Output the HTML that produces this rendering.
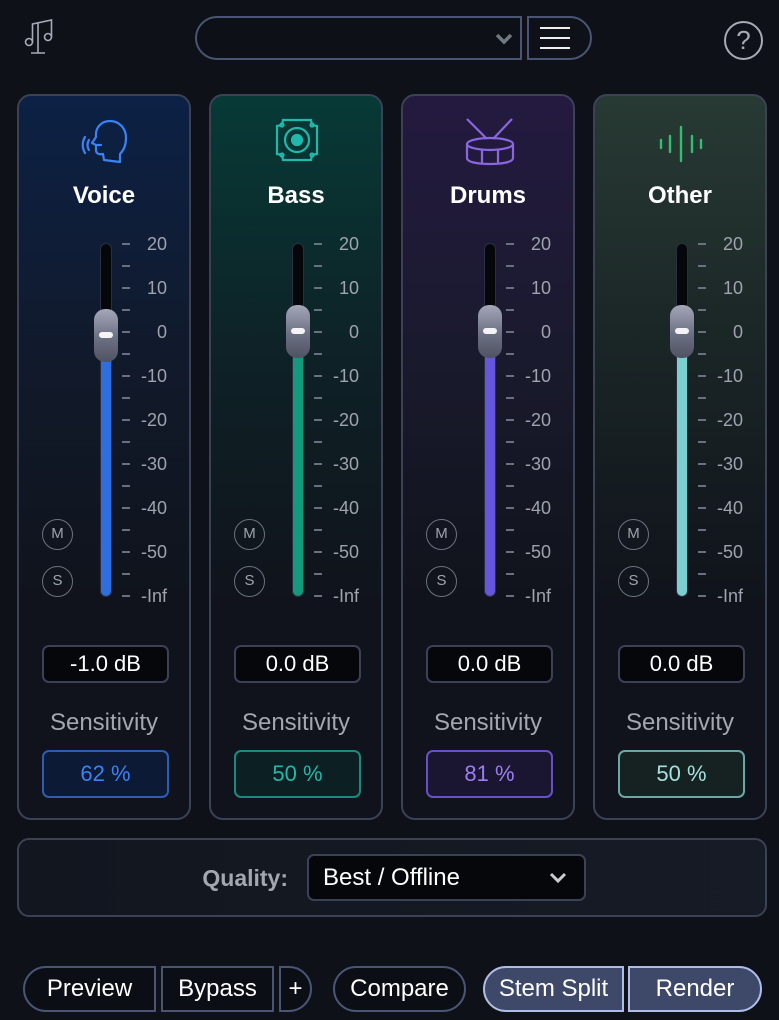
<!DOCTYPE html>
<html><head><meta charset="utf-8"><style>
*{margin:0;padding:0;box-sizing:border-box}
body{width:779px;height:1020px;background:#0e1118;font-family:"Liberation Sans",sans-serif;position:relative;overflow:hidden;color:#fff}
.a{position:absolute}
.panel{position:absolute;top:94px;width:174px;height:726px;border:2px solid #3b4258;border-radius:14px;overflow:hidden}
.title{position:absolute;top:86px;width:100%;text-align:center;font-weight:bold;font-size:24px;color:#fff}
.track{position:absolute;left:81px;top:147px;width:12px;height:354px;border-radius:6px;background:#05070b;border:1px solid #2a3040}
.fill{position:absolute;left:82px;width:10px;border-radius:0 0 5px 5px}
.thumb{position:absolute;left:75px;width:24px;height:53px;border-radius:11px;background:linear-gradient(#a3a7b8,#6c7083 55%,#4e5262)}
.thumb:after{content:"";position:absolute;left:5px;top:23px;width:14px;height:6px;border-radius:3px;background:#f4f4f6}
.ticks{position:absolute;left:103px;top:147px;width:8px;height:355px;background:repeating-linear-gradient(to bottom,#6a7080 0 2px,transparent 2px 22px)}
.lab{position:absolute;right:22px;font-size:18px;color:#9ea3ad;line-height:20px;text-align:right}
.ms{position:absolute;left:23px;width:31px;height:31px;border:1.5px solid #6c7280;border-radius:50%;font-size:15px;color:#9ea3ad;text-align:center;line-height:28px}
.db{position:absolute;left:23px;top:549px;width:127px;height:38px;background:#05070b;border:2px solid #3b4258;border-radius:7px;text-align:center;font-size:22px;line-height:34px;color:#fff}
.sens{position:absolute;top:613px;width:100%;text-align:center;font-size:24px;color:#a3a7b0}
.pct{position:absolute;left:23px;top:654px;width:127px;height:48px;border:2px solid;border-radius:7px;text-align:center;font-size:22px;line-height:44px}
.btn{position:absolute;top:966px;height:46px;border:2px solid #4a5575;background:#0b0e15;font-size:24px;text-align:center;line-height:42px;color:#fff}
</style></head><body>

<svg class="a" style="left:22px;top:18px" width="34" height="38" viewBox="0 0 34 38" fill="none" stroke="#a6abb6" stroke-width="1.6">
<circle cx="7" cy="24" r="3.5"/><circle cx="26" cy="19" r="3.5"/><path d="M10.5 24V6L29.5 2V19"/><path d="M16 5v30M9 35h14"/></svg>
<div class="a" style="left:195px;top:16px;width:327px;height:44px;border:2px solid #4a5575;border-radius:22px 0 0 22px;background:#0d1017"></div>
<svg class="a" style="left:494px;top:32px" width="20" height="14" viewBox="0 0 20 14"><path d="M3 3l7 7 7-7" stroke="#6d7a80" stroke-width="3.5" fill="none"/></svg>
<div class="a" style="left:527px;top:16px;width:65px;height:44px;border:2px solid #4a5575;border-radius:0 22px 22px 0"></div>
<div class="a" style="left:540px;top:27px;width:30px;height:2px;background:#eee;box-shadow:0 10px 0 #eee,0 20px 0 #eee"></div>
<div class="a" style="left:724px;top:21px;width:39px;height:39px;border:2px solid #a6abb6;border-radius:50%;text-align:center;font-size:26px;line-height:35px;color:#a6abb6">?</div>

<!-- Voice -->
<div class="panel" style="left:17px;background:linear-gradient(#0c2145 0%,#111a2c 35%,#10131b 70%)">
<svg class="a" style="left:61px;top:20px" width="50" height="50" viewBox="0 0 50 50" fill="none" stroke="#3b82f6" stroke-width="2.2" stroke-linecap="round" stroke-linejoin="round">
<path d="M40 46V38C44 34 46 29 46 22C46 12 39 5 30 5C21 5 15 12 16 21L12 27L16 29V34C16 37 18 39 23 38L24 44Z"/><path d="M16 29h5"/><path d="M9 24c-2 3-2 7 0 10M5 21c-3 5-3 11 0 16"/></svg>
<div class="title">Voice</div>
<div class="track"></div><div class="fill" style="top:239px;height:261px;background:#2e6ee0"></div>
<div class="thumb" style="top:213px"></div>
<div class="ticks"></div>
<div class="lab" style="top:138px">20</div><div class="lab" style="top:182px">10</div><div class="lab" style="top:226px">0</div><div class="lab" style="top:270px">-10</div><div class="lab" style="top:314px">-20</div><div class="lab" style="top:358px">-30</div><div class="lab" style="top:402px">-40</div><div class="lab" style="top:446px">-50</div><div class="lab" style="top:490px">-Inf</div>
<div class="ms" style="top:423px">M</div><div class="ms" style="top:470px">S</div>
<div class="db">-1.0 dB</div><div class="sens">Sensitivity</div>
<div class="pct" style="border-color:#2d5cb0;background:#0c1a35;color:#3b82f6">62 %</div>
</div>

<!-- Bass -->
<div class="panel" style="left:209px;background:linear-gradient(#073a36 0%,#0e2227 35%,#10131b 70%)">
<svg class="a" style="left:62px;top:20px" width="48" height="48" viewBox="0 0 48 48" fill="none" stroke="#20b8ad" stroke-width="2.2">
<path d="M10 4h28a6 6 0 0 0 6 6v28a6 6 0 0 0-6 6H10a6 6 0 0 0-6-6V10a6 6 0 0 0 6-6z"/><circle cx="24" cy="24" r="12"/><circle cx="24" cy="24" r="5" fill="#20b8ad"/><circle cx="9" cy="9" r="1.5"/><circle cx="39" cy="9" r="1.5"/><circle cx="9" cy="39" r="1.5"/><circle cx="39" cy="39" r="1.5"/></svg>
<div class="title">Bass</div>
<div class="track"></div><div class="fill" style="top:239px;height:261px;background:#139a7d"></div>
<div class="thumb" style="top:209px"></div>
<div class="ticks"></div>
<div class="lab" style="top:138px">20</div><div class="lab" style="top:182px">10</div><div class="lab" style="top:226px">0</div><div class="lab" style="top:270px">-10</div><div class="lab" style="top:314px">-20</div><div class="lab" style="top:358px">-30</div><div class="lab" style="top:402px">-40</div><div class="lab" style="top:446px">-50</div><div class="lab" style="top:490px">-Inf</div>
<div class="ms" style="top:423px">M</div><div class="ms" style="top:470px">S</div>
<div class="db">0.0 dB</div><div class="sens">Sensitivity</div>
<div class="pct" style="border-color:#1a8a80;background:#0c1f22;color:#22b8aa">50 %</div>
</div>

<!-- Drums -->
<div class="panel" style="left:401px;background:linear-gradient(#241a40 0%,#1a1a2e 35%,#10131b 70%)">
<svg class="a" style="left:61px;top:18px" width="52" height="52" viewBox="0 0 52 52" fill="none" stroke="#8a66e0" stroke-width="2.2" stroke-linejoin="round">
<path d="M3 5l20 20M48 5L29 25"/><ellipse cx="26" cy="30" rx="23" ry="6"/><path d="M3 30v14c0 4 10 6 23 6s23-2 23-6V30M18 36v14M34 36v14"/></svg>
<div class="title">Drums</div>
<div class="track"></div><div class="fill" style="top:239px;height:261px;background:#6656df"></div>
<div class="thumb" style="top:209px"></div>
<div class="ticks"></div>
<div class="lab" style="top:138px">20</div><div class="lab" style="top:182px">10</div><div class="lab" style="top:226px">0</div><div class="lab" style="top:270px">-10</div><div class="lab" style="top:314px">-20</div><div class="lab" style="top:358px">-30</div><div class="lab" style="top:402px">-40</div><div class="lab" style="top:446px">-50</div><div class="lab" style="top:490px">-Inf</div>
<div class="ms" style="top:423px">M</div><div class="ms" style="top:470px">S</div>
<div class="db">0.0 dB</div><div class="sens">Sensitivity</div>
<div class="pct" style="border-color:#6a50c8;background:#1a1530;color:#9d7ef2">81 %</div>
</div>

<!-- Other -->
<div class="panel" style="left:593px;background:linear-gradient(#283a34 0%,#1a2526 35%,#10131b 70%)">
<svg class="a" style="left:62px;top:28px" width="48" height="40" viewBox="0 0 48 40" stroke="#2fbf6e" stroke-width="2.4" stroke-linecap="round">
<path d="M4 16v8M13 12v16M24 3v34M35 12v16M44 16v8"/></svg>
<div class="title">Other</div>
<div class="track"></div><div class="fill" style="top:239px;height:261px;background:#7ccfd0"></div>
<div class="thumb" style="top:209px"></div>
<div class="ticks"></div>
<div class="lab" style="top:138px">20</div><div class="lab" style="top:182px">10</div><div class="lab" style="top:226px">0</div><div class="lab" style="top:270px">-10</div><div class="lab" style="top:314px">-20</div><div class="lab" style="top:358px">-30</div><div class="lab" style="top:402px">-40</div><div class="lab" style="top:446px">-50</div><div class="lab" style="top:490px">-Inf</div>
<div class="ms" style="top:423px">M</div><div class="ms" style="top:470px">S</div>
<div class="db">0.0 dB</div><div class="sens">Sensitivity</div>
<div class="pct" style="border-color:#6aa8a6;background:#152221;color:#a6e0de">50 %</div>
</div>

<div class="a" style="left:17px;top:838px;width:750px;height:79px;border:2px solid #3b4258;border-radius:12px;background:linear-gradient(90deg,#12161f,#171b25)"></div>
<div class="a" style="left:150px;top:864px;width:138px;text-align:right;font-size:23px;font-weight:bold;color:#a3a7b0;line-height:28px">Quality:</div>
<div class="a" style="left:307px;top:854px;width:279px;height:47px;border:2px solid #3b4258;border-radius:7px;background:#05070b;font-size:24px;line-height:43px;padding-left:14px">Best / Offline</div>
<svg class="a" style="left:548px;top:871px" width="20" height="14" viewBox="0 0 20 14"><path d="M3 3l7 7 7-7" stroke="#ccc" stroke-width="3" fill="none"/></svg>

<div class="btn" style="left:23px;width:133px;border-radius:23px 0 0 23px">Preview</div>
<div class="btn" style="left:161px;width:113px">Bypass</div>
<div class="btn" style="left:279px;width:33px;border-radius:0 23px 23px 0">+</div>
<div class="btn" style="left:333px;width:133px;border-radius:23px">Compare</div>
<div class="btn" style="left:483px;width:141px;border-radius:23px 0 0 23px;background:#3e4969;border-color:#aebde8">Stem Split</div>
<div class="btn" style="left:628px;width:134px;border-radius:0 23px 23px 0;background:#3e4969;border-color:#aebde8">Render</div>
</body></html>
